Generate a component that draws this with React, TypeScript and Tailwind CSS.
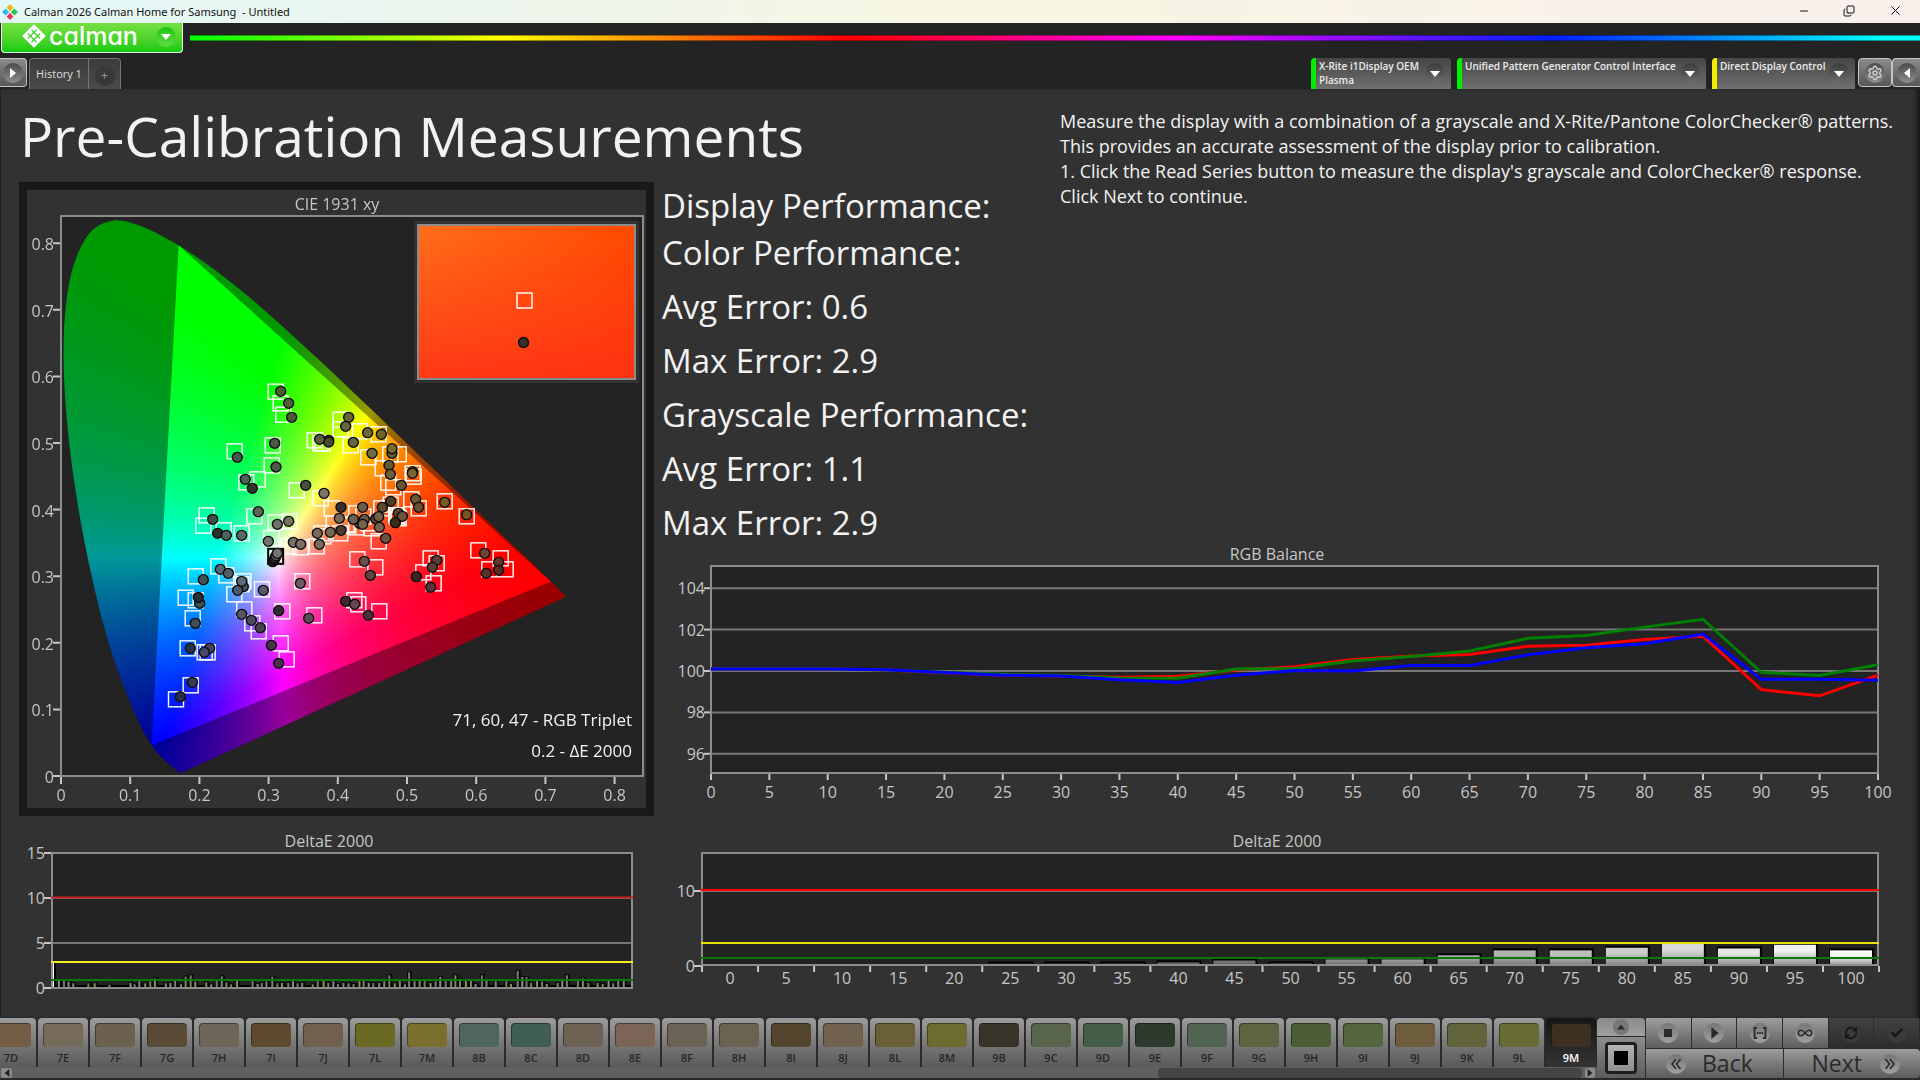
import { useLayoutEffect, useRef, type ReactNode } from "react";
import { Settings, Check, RefreshCw, X, Minus, Copy, Infinity as Loop } from "lucide-react";

type Pt = [number, number];
type Dot = [number, number, string];

const LABEL = "#c6c6c6";
const FRAME = "#8c8c8c";

/* ---------- CIE 1931 diagram ---------- */

const LOCUS: Pt[] = [
  [0.1741, 0.005], [0.1736, 0.0049], [0.1714, 0.0051], [0.1644, 0.0109], [0.1566, 0.0177],
  [0.144, 0.0297], [0.1355, 0.0399], [0.1241, 0.0578], [0.1096, 0.0868], [0.0913, 0.1327],
  [0.0687, 0.2007], [0.0454, 0.295], [0.0235, 0.4127], [0.0082, 0.5384], [0.0039, 0.6548],
  [0.0139, 0.7502], [0.0389, 0.812], [0.0743, 0.8338], [0.1142, 0.8262], [0.1547, 0.8059],
  [0.1929, 0.7816], [0.2296, 0.7543], [0.2658, 0.7243], [0.3016, 0.6923], [0.3373, 0.6589],
  [0.3731, 0.6245], [0.4087, 0.5896], [0.4441, 0.5547], [0.4788, 0.5202], [0.5125, 0.4866],
  [0.5448, 0.4544], [0.5752, 0.4242], [0.6029, 0.3965], [0.627, 0.3725], [0.6482, 0.3514],
  [0.6658, 0.334], [0.6915, 0.3083], [0.714, 0.2859], [0.7300, 0.2690],
];
const GAMUT: Pt[] = [[0.17, 0.797], [0.708, 0.292], [0.131, 0.046]];

const PANEL = { x: 27, y: 190, w: 619, h: 618 };
const cx = (x: number) => 61 + 692 * x;
const cy = (y: number) => 776 - 666 * y;

function smoothPath(ctx: CanvasRenderingContext2D, pts: Pt[]) {
  const p = pts.map(([x, y]): Pt => [cx(x) - PANEL.x, cy(y) - PANEL.y]);
  ctx.beginPath();
  ctx.moveTo(p[0][0], p[0][1]);
  for (let i = 0; i < p.length - 1; i++) {
    const a = p[Math.max(i - 1, 0)], b = p[i], c = p[i + 1], d = p[Math.min(i + 2, p.length - 1)];
    ctx.bezierCurveTo(
      b[0] + (c[0] - a[0]) / 6, b[1] + (c[1] - a[1]) / 6,
      c[0] - (d[0] - b[0]) / 6, c[1] - (d[1] - b[1]) / 6,
      c[0], c[1],
    );
  }
  ctx.closePath();
}

function colourField(gain: number) {
  const c = document.createElement("canvas");
  c.width = PANEL.w;
  c.height = PANEL.h;
  const ctx = c.getContext("2d")!;
  const img = ctx.createImageData(PANEL.w, PANEL.h);
  for (let j = 0; j < PANEL.h; j++) {
    for (let i = 0; i < PANEL.w; i++) {
      const x = (i + PANEL.x - 61) / 692;
      const y = Math.max((776 - j - PANEL.y) / 666, 0.002);
      const X = x / y, Z = (1 - x - y) / y;
      const rgb = [
        3.2406 * X - 1.5372 - 0.4986 * Z,
        -0.9689 * X + 1.8758 + 0.0415 * Z,
        0.0557 * X - 0.204 + 1.057 * Z,
      ].map((v) => Math.max(v, 0));
      const top = Math.max(...rgb, 0.0001);
      const o = (j * PANEL.w + i) * 4;
      for (let k = 0; k < 3; k++) img.data[o + k] = (rgb[k] / top) * 255 * gain;
      img.data[o + 3] = 255;
    }
  }
  ctx.putImageData(img, 0, 0);
  return c;
}

function Horseshoe() {
  const ref = useRef<HTMLCanvasElement>(null);
  useLayoutEffect(() => {
    const ctx = ref.current!.getContext("2d")!;
    ctx.clearRect(0, 0, PANEL.w, PANEL.h);
    ctx.save();
    smoothPath(ctx, LOCUS);
    ctx.clip();
    ctx.drawImage(colourField(0.6), 0, 0);
    ctx.beginPath();
    GAMUT.forEach(([x, y], i) => {
      if (i) ctx.lineTo(cx(x) - PANEL.x, cy(y) - PANEL.y);
      else ctx.moveTo(cx(x) - PANEL.x, cy(y) - PANEL.y);
    });
    ctx.closePath();
    ctx.clip();
    ctx.drawImage(colourField(1), 0, 0);
    ctx.restore();
  }, []);
  return <canvas ref={ref} width={PANEL.w} height={PANEL.h} className="absolute inset-0 h-full w-full" />;
}

/* Marker coordinates are in thirds of a unit, measured from (180, 370). */
const TARGETS: Pt[] = [
  [287, 65], [302, 100], [310, 134], [278, 226], [164, 244], [275, 286], [233, 328], [199, 337],
  [404, 211], [421, 220], [428, 220], [482, 149], [482, 178], [540, 184], [596, 193], [512, 226],
  [565, 262], [631, 253], [656, 253], [608, 295], [698, 310], [701, 320], [625, 338], [640, 352],
  [350, 361], [422, 385], [80, 436], [70, 467], [131, 481], [185, 490], [223, 439], [287, 457],
  [328, 454], [274, 505], [455, 415], [694, 388], [716, 415], [794, 394], [860, 439], [632, 404],
  [604, 415], [529, 430], [649, 436], [652, 440], [656, 445], [461, 460], [424, 490], [481, 490],
  [430, 499], [325, 529], [362, 532], [410, 529], [500, 463], [505, 466], [529, 472], [550, 440],
  [575, 475], [566, 460], [596, 514], [115, 589], [47, 619], [139, 616], [190, 634], [184, 643],
  [163, 673], [17, 683], [47, 691], [246, 658], [367, 634], [193, 718], [38, 745], [217, 760],
  [236, 784], [307, 724], [403, 736], [302, 820], [320, 868], [23, 835], [74, 847], [83, 847],
  [32, 946], [-12, 988], [532, 568], [586, 592], [523, 691], [535, 703], [598, 724], [752, 565],
  [770, 580], [730, 607], [761, 640], [895, 541], [962, 565], [928, 598], [977, 598],
];

const READINGS: Dot[] = [
  [302, 64, "#4c5c30"], [326, 100, "#4f5f38"], [335, 142, "#4b5b35"], [284, 220, "#4a5a45"],
  [172, 262, "#43564c"], [288, 291, "#4f5a45"], [196, 328, "#4a5f55"], [217, 355, "#2c352e"],
  [446, 211, "#3f4425"], [446, 216, "#484b28"], [419, 208, "#5a5f3a"], [506, 142, "#66652f"],
  [497, 169, "#65653a"], [563, 188, "#6b6a35"], [604, 193, "#6e6628"], [520, 217, "#66643a"],
  [576, 250, "#736c40"], [636, 250, "#6a5d2c"], [636, 236, "#786a2e"], [627, 286, "#67592f"],
  [631, 313, "#6f5f3c"], [698, 305, "#5c4520"], [697, 310, "#7c6430"], [664, 346, "#665532"],
  [377, 346, "#4a5040"], [432, 370, "#7a7563"], [483, 412, "#372f25"], [548, 412, "#6b5d48"],
  [607, 412, "#5c4a33"], [632, 394, "#4c3e2b"], [707, 388, "#6d5833"], [716, 412, "#6a5030"],
  [794, 397, "#7a5a26"], [860, 434, "#7a5520"], [655, 430, "#5c4530"], [667, 439, "#6b5540"],
  [646, 458, "#3c2a1d"], [235, 425, "#5a645c"], [98, 448, "#3a5048"], [113, 490, "#24322d"],
  [139, 496, "#4d615b"], [185, 496, "#596b65"], [292, 463, "#70736a"], [326, 454, "#74735f"],
  [265, 514, "#707570"], [478, 445, "#7a6a58"], [538, 460, "#6a5746"], [520, 448, "#6e5f4e"],
  [553, 448, "#6a5644"], [548, 463, "#75614f"], [587, 446, "#5c4735"], [596, 440, "#755f49"],
  [598, 472, "#76604e"], [617, 505, "#6e5343"], [412, 490, "#766a5c"], [451, 487, "#75685b"],
  [483, 481, "#4c3a30"], [340, 517, "#77716a"], [362, 523, "#7b7068"], [418, 523, "#7a6a60"],
  [121, 598, "#56666d"], [145, 610, "#505f66"], [70, 629, "#41545a"], [190, 650, "#4a5562"],
  [173, 661, "#50596a"], [185, 634, "#5d6b76"], [59, 700, "#415056"], [55, 682, "#233036"],
  [250, 661, "#59586a"], [361, 640, "#6e5a62"], [46, 760, "#414f5a"], [185, 733, "#565665"],
  [214, 751, "#4d4a5c"], [241, 773, "#463f50"], [296, 722, "#332a35"], [386, 745, "#604a58"],
  [274, 826, "#48334a"], [296, 880, "#4a2c4a"], [31, 835, "#273248"], [89, 835, "#434360"],
  [73, 847, "#484868"], [37, 937, "#383a58"], [1, 980, "#2c2c4c"], [553, 574, "#6a4f4b"],
  [571, 616, "#604448"], [497, 694, "#43272e"], [524, 703, "#664450"], [565, 736, "#4f2e3c"],
  [770, 571, "#5f3c35"], [757, 592, "#5c3a36"], [709, 620, "#3f2426"], [752, 652, "#5a333a"],
  [914, 550, "#6f4530"], [956, 577, "#6a3528"], [919, 610, "#5c2f2b"], [956, 601, "#5a2a25"],
];
const WHITE_CLUSTER: Dot[] = [
  [278, 575, "#1f1f1f"], [282, 570, "#2a2a2a"], [285, 564, "#444"], [288, 558, "#5a5a5a"], [292, 550, "#767676"],
];

const mx = (x: number) => 180 + x / 3;
const my = (y: number) => 370 + y / 3;

function Dots({ items }: { items: Dot[] }) {
  return (
    <>
      {items.map(([x, y, c], i) => (
        <circle key={i} cx={mx(x)} cy={my(y)} r="5" fill={c} stroke="#0c0c0c" strokeWidth="1.4" />
      ))}
    </>
  );
}

function CieChart() {
  const ticks = [0, 1, 2, 3, 4, 5, 6, 7, 8];
  return (
    <figure className="relative bg-[#323232]">
      <svg viewBox="27 190 619 618" className="block w-full">
        <rect x="61" y="216" width="582" height="560" fill="#232323" />
      </svg>
      <Horseshoe />
      <svg viewBox="27 190 619 618" className="absolute inset-0 h-full w-full" fontSize="16" fill={LABEL} role="img" aria-label="CIE 1931 xy chart">
        <text x="337" y="210" textAnchor="middle">CIE 1931 xy</text>
        <rect x="61" y="216" width="582" height="560" fill="none" stroke={FRAME} strokeWidth="2" />
        {ticks.map((t) => (
          <g key={t}>
            <path d={`M${cx(t / 10)} 777v7M60 ${cy(t / 10)}h-7`} stroke={LABEL} strokeWidth="2" />
            <text x={cx(t / 10)} y="801" textAnchor="middle">{t ? `0.${t}` : "0"}</text>
            <text x="54" y={cy(t / 10) + 7} textAnchor="end">{t ? `0.${t}` : "0"}</text>
          </g>
        ))}
        <g fill="none" stroke="#fff" strokeWidth="1.4">
          {TARGETS.map(([x, y], i) => (
            <rect key={i} x={mx(x) - 7.5} y={my(y) - 7.5} width="15" height="15" />
          ))}
        </g>
        <Dots items={READINGS} />
        <rect x={mx(287) - 7.5} y={my(559) - 7.5} width="15" height="15" fill="none" stroke="#000" strokeWidth="2" />
        <Dots items={WHITE_CLUSTER} />
        <defs>
          <linearGradient id="inset" x1="0" y1="0" x2="1" y2="0">
            <stop offset="0" stopColor="#ff6f1a" />
            <stop offset="1" stopColor="#ff4a00" />
          </linearGradient>
          <linearGradient id="insetFade" x1="0" y1="0" x2="0" y2="1">
            <stop offset="0" stopColor="#ff3018" stopOpacity="0" />
            <stop offset="1" stopColor="#ff2e14" stopOpacity="0.85" />
          </linearGradient>
        </defs>
        <rect x="414" y="221" width="225" height="162" fill="#323232" />
        <rect x="418" y="225" width="217" height="154" fill="url(#inset)" />
        <rect x="418" y="225" width="217" height="154" fill="url(#insetFade)" stroke={FRAME} strokeWidth="2" />
        <rect x="517" y="293" width="15" height="15" fill="none" stroke="#fff" strokeWidth="1.4" />
        <circle cx="523.5" cy="342.5" r="5" fill="#3b3024" stroke="#0c0c0c" strokeWidth="1.4" />
        <g fill="#f2f2f2" fontSize="17" textAnchor="end">
          <text x="632" y="726">71, 60, 47 - RGB Triplet</text>
          <text x="632" y="757">0.2 - ΔE 2000</text>
        </g>
      </svg>
    </figure>
  );
}

/* ---------- RGB balance ---------- */

const RED = [100.1, 100.1, 100.1, 100.05, 99.92, 99.8, 99.76, 99.7, 99.75, 100.05, 100.2, 100.55, 100.72, 100.8, 101.2, 101.25, 101.52, 101.68, 99.1, 98.8, 99.8];
const GREEN = [100.1, 100.1, 100.1, 100.05, 99.94, 99.84, 99.78, 99.66, 99.65, 100.1, 100.12, 100.48, 100.7, 100.97, 101.58, 101.72, 102.12, 102.5, 99.94, 99.78, 100.3];
const BLUE = [100.1, 100.1, 100.1, 100.06, 99.93, 99.8, 99.76, 99.58, 99.45, 99.8, 100.02, 100, 100.26, 100.26, 100.78, 101.12, 101.32, 101.78, 99.6, 99.6, 99.55];

function RgbBalance() {
  const x = (i: number) => 711 + i * 58.35;
  const y = (v: number) => 671 - (v - 100) * 20.7;
  const line = (s: number[]) => s.map((v, i) => `${x(i)},${y(v)}`).join(" ");
  return (
    <svg viewBox="654 541 1266 275" className="block w-full" fontSize="16" fill={LABEL} role="img" aria-label="RGB Balance chart">
      <text x="1277" y="560" textAnchor="middle">RGB Balance</text>
      <rect x="711" y="566" width="1167" height="207" fill="#232323" />
      {[104, 102, 100, 98, 96].map((v) => (
        <g key={v}>
          <path d={`M711 ${y(v)}H1878`} stroke="#777" strokeWidth="2" />
          <path d={`M704 ${y(v)}h7`} stroke={LABEL} strokeWidth="2" />
          <text x="705" y={y(v) + 6} textAnchor="end">{v}</text>
        </g>
      ))}
      <rect x="711" y="566" width="1167" height="207" fill="none" stroke={FRAME} strokeWidth="2" />
      {RED.map((_, i) => (
        <g key={i}>
          <path d={`M${x(i)} 774v6`} stroke={LABEL} strokeWidth="2" />
          <text x={x(i)} y="798" textAnchor="middle">{i * 5}</text>
        </g>
      ))}
      <g fill="none" strokeWidth="3">
        <polyline points={line(RED)} stroke="#f00" />
        <polyline points={line(GREEN)} stroke="#008000" />
        <polyline points={line(BLUE)} stroke="#00f" />
      </g>
    </svg>
  );
}

/* ---------- DeltaE charts ---------- */

/* Position and height of each patch bar, in chart thirds. */
const PATCH_BARS: Pt[] = [
  [140, 20], [152, 19], [163, 16], [174, 11], [210, 11], [225, 11], [260, 7], [310, 12], [320, 8],
  [331, 18], [345, 11], [357, 17], [368, 26], [394, 11], [405, 12], [416, 20], [430, 8], [441, 31],
  [453, 35], [464, 16], [490, 14], [502, 8], [515, 18], [527, 32], [538, 13], [549, 8], [563, 21],
  [600, 18], [612, 9], [622, 12], [633, 17], [647, 31], [659, 11], [670, 12], [685, 12], [696, 17],
  [707, 11], [718, 12], [743, 8], [755, 18], [769, 21], [780, 12], [792, 17], [803, 9], [816, 12],
  [828, 11], [840, 9], [854, 20], [864, 18], [876, 12], [887, 12], [901, 12], [913, 17], [925, 35],
  [938, 11], [950, 20], [962, 8], [972, 44], [985, 17], [997, 25], [1009, 18], [1023, 12], [1035, 17],
  [1046, 30], [1059, 18], [1072, 20], [1082, 35], [1093, 25], [1107, 18], [1119, 18], [1130, 9],
  [1145, 35], [1156, 18], [1178, 17], [1203, 18], [1214, 9], [1230, 48], [1241, 30], [1251, 30],
  [1262, 12], [1276, 20], [1288, 17], [1299, 9], [1325, 12], [1336, 20], [1347, 35], [1373, 18],
  [1385, 26], [1398, 12], [1420, 12], [1432, 9], [1446, 18], [1457, 11], [1469, 18], [1482, 26],
];
const BAR_TINTS = ["#8d8d8d", "#7e8a60", "#8a7a6a", "#6d8a88", "#9a8a55", "#86707c", "#708060"];

function PatchDelta() {
  return (
    <svg viewBox="0 828 654 172" className="block w-full" fontSize="16" fill={LABEL} role="img" aria-label="DeltaE 2000 per patch">
      <text x="329" y="847" textAnchor="middle">DeltaE 2000</text>
      <rect x="52" y="853" width="580" height="135" fill="#232323" />
      {[15, 10, 5, 0].map((v) => (
        <g key={v}>
          <path d={`M52 ${988 - v * 9}H632`} stroke="#777" strokeWidth="2" />
          <path d={`M44 ${988 - v * 9}h7`} stroke={LABEL} strokeWidth="2" />
          <text x="45" y={994 - v * 9} textAnchor="end">{v}</text>
        </g>
      ))}
      <path d="M56 986H632" stroke="#000" strokeWidth="2" />
      {PATCH_BARS.map(([x, h], i) => (
        <g key={x}>
          <rect x={x / 2.376 - 2} y={987 - h / 3 - 1} width="5" height={h / 3 + 1} fill="#080808" />
          <rect x={x / 2.376 - 1} y={987 - h / 3} width="2" height={h / 3} fill={BAR_TINTS[(i * 5) % 7]} />
        </g>
      ))}
      <rect x="54" y="962" width="2" height="26" fill="#000" />
      <rect x="52" y="962" width="2" height="26" fill="#fff" />
      <rect x="52" y="853" width="580" height="135" fill="none" stroke={FRAME} strokeWidth="2" />
      <path d="M51 897.500H633" stroke="#c82020" strokeWidth="2" />
      <path d="M51 962H633" stroke="#f2ee20" strokeWidth="2" />
      <path d="M51 980H633" stroke="#087808" strokeWidth="2" />
    </svg>
  );
}

const GRAY_BARS: number[] = [0, 0, 0, 0, 0, 0.2, 0.2, 0.2, 0.35, 0.6, 0.2, 0.75, 0.75, 1.3, 1.95, 1.95, 2.3, 2.8, 2.2, 2.7, 1.95];

function GrayDelta() {
  const step = 56.05;
  return (
    <svg viewBox="654 828 1266 172" className="block w-full" fontSize="16" fill={LABEL} role="img" aria-label="DeltaE 2000 per gray level">
      <defs>
        <linearGradient id="shade" x1="0" y1="0" x2="0" y2="1">
          <stop offset="0.3" stopColor="#555" stopOpacity="0" />
          <stop offset="1" stopColor="#555" stopOpacity="0.6" />
        </linearGradient>
      </defs>
      <text x="1277" y="847" textAnchor="middle">DeltaE 2000</text>
      <rect x="702" y="853" width="1176" height="112" fill="#232323" />
      <path d="M702 891H1878" stroke="#777" strokeWidth="2" />
      {[10, 0].map((v) => (
        <g key={v}>
          <path d={`M694 ${966 - v * 7.5}h7`} stroke={LABEL} strokeWidth="2" />
          <text x="695" y={972 - v * 7.5} textAnchor="end">{v}</text>
        </g>
      ))}
      {GRAY_BARS.map((v, i) => {
        const x = 702 + i * step;
        const g = Math.round(i * 12.75);
        return (
          <g key={i}>
            {v > 0 && (
              <>
                <rect x={x + 6} y={964 - v * 7.5 - 1} width="45" height={v * 7.5 + 2} fill="#000" />
                <rect x={x + 7} y={965 - v * 7.5} width="42" height={v * 7.5} fill={`rgb(${g},${g},${g})`} />
                <rect x={x + 7} y={965 - v * 7.5} width="42" height={v * 7.5} fill="url(#shade)" />
              </>
            )}
            <path d={`M${x} 966v6`} stroke={LABEL} strokeWidth="2" />
            <text x={x + step / 2} y="984" textAnchor="middle">{i * 5}</text>
          </g>
        );
      })}
      <path d={`M${702 + 21 * step} 966v6`} stroke={LABEL} strokeWidth="2" />
      <rect x="702" y="853" width="1176" height="112" fill="none" stroke={FRAME} strokeWidth="2" />
      <path d="M701 890H1879" stroke="#f00" strokeWidth="2" />
      <path d="M701 943H1879" stroke="#e8e000" strokeWidth="2" />
      <path d="M701 958H1879" stroke="#087808" strokeWidth="2" />
    </svg>
  );
}

/* ---------- Chrome ---------- */

function Triangle({ dir, className }: { dir: "down" | "left" | "right" | "up"; className?: string }) {
  const d = { down: "M0 2h10L5 8z", up: "M0 8h10L5 2z", left: "M8 0v10L2 5z", right: "M2 0v10l6-5z" }[dir];
  return (
    <svg viewBox="0 0 10 10" className={className ?? "size-2.5"} fill="currentColor" aria-hidden="true">
      <path d={d} />
    </svg>
  );
}

function TitleBar() {
  return (
    <div className="flex h-[23px] items-center bg-linear-to-r from-[#e2f7f8] via-[#f7f5e2] to-[#f9f0ec] pl-[2px] text-[11px] text-[#111]">
      <svg viewBox="0 0 16 16" className="size-4" aria-hidden="true">
        <path d="M8 0l3.400 3.600L8 7.200 4.600 3.600z" fill="#f5b81c" />
        <path d="M12.400 4.400L16 8l-3.600 3.600L8.900 8z" fill="#2fc24a" />
        <path d="M8 8.800l3.400 3.600L8 16l-3.400-3.600z" fill="#ee2f5e" />
        <path d="M3.600 4.400L7.100 8l-3.500 3.600L0 8z" fill="#35b5e8" />
      </svg>
      <span className="ml-[6px] flex-1 pt-px font-['Noto_Sans',sans-serif] whitespace-pre">Calman 2026 Calman Home for Samsung  - Untitled</span>
      <button aria-label="Minimize" className="flex w-[45px] justify-center pb-[2px]"><Minus className="size-3" strokeWidth={2} /></button>
      <button aria-label="Restore" className="flex w-[45px] justify-center pb-[2px]"><Copy className="size-3 -scale-x-100 rotate-180" strokeWidth={2} /></button>
      <button aria-label="Close" className="flex w-[49px] justify-center pb-[2px]"><X className="size-[15px]" strokeWidth={1.6} /></button>
    </div>
  );
}

function LogoMark() {
  return (
    <svg viewBox="0 0 24 24" className="size-6" aria-hidden="true">
      <path d="M12 1.200L22.800 12 12 22.800 1.200 12z" fill="#fff" stroke="#fff" strokeWidth="1.600" strokeLinejoin="round" />
      <g transform="rotate(45 12 12)" fill="none" stroke="#3ed32a" strokeWidth="1.200">
        <path d="M9.500 6v12M14.500 6v12M6 9.500h12M6 14.500h12" />
      </g>
    </svg>
  );
}

function Header() {
  return (
    <header className="flex h-[30px] items-center bg-[#232323]">
      <button aria-label="calman menu" className="ml-px flex h-[30px] w-[182px] items-center self-start rounded-b-[4px] border-x border-b border-[#e8ffe8] bg-linear-to-b from-[#74e042] to-[#06cb10] pb-[3px] pl-5 text-white">
        <LogoMark />
        <span className="ml-[3px] font-['Inter'] text-[25px] leading-6 font-medium [font-feature-settings:'cv11']">calman</span>
        <span className="mt-[2px] mr-[6px] ml-auto flex size-5 items-center justify-center rounded-full bg-linear-to-b from-[#0cc414] to-[#60dc40]">
          <Triangle dir="down" />
        </span>
      </button>
      <div className="ml-[7px] h-[6px] flex-1 border-y border-black/40 bg-[linear-gradient(to_right,#00ff00,#ffff00_18%,#ff0000_38%,#ff00ff_57%,#0020ff_79%,#00ffff_98%)]" />
    </header>
  );
}

function DeviceTab({ stripe, width, lines }: { stripe: string; width: string; lines: string[] }) {
  return (
    <button className={`flex h-[31px] items-start overflow-hidden rounded-t-[4px] bg-linear-to-b from-[#464646] to-[#707070] text-left ${width}`}>
      <span className={`h-full w-[5px] shrink-0 ${stripe}`} />
      <span className="ml-[3px] flex-1 pt-px text-[10px] leading-[14px] font-semibold whitespace-nowrap text-[#ececec]">
        {lines.map((l) => (
          <span key={l} className="block">{l}</span>
        ))}
      </span>
      <span className="mt-[5px] mr-[6px] flex size-5 shrink-0 items-center justify-center rounded-full bg-linear-to-b from-[#3c3c3c] to-[#6c6c6c] pt-[2px] text-white">
        <Triangle dir="down" />
      </span>
    </button>
  );
}

const chromeButton = "flex h-[29px] items-center justify-center border border-[#c4c4c4] bg-linear-to-b from-[#8c8c8c] to-[#565656]";
const chromeDisc = "flex size-5 items-center justify-center rounded-full bg-linear-to-b from-[#4c4c4c] to-[#8e8e8e] text-white";

function TabRow() {
  return (
    <nav className="flex h-[36px] items-start bg-[#232323] pt-[5px]">
      <button aria-label="Expand panel" className={`w-[27px] rounded-r-[4px] border-l-0 ${chromeButton}`}>
        <span className={chromeDisc}><Triangle dir="right" className="size-2.5" /></span>
      </button>
      <div className="ml-[2px] flex h-[31px] rounded-t-[4px] border border-b-0 border-[#747474] bg-linear-to-b from-[#3c3c3c] to-[#4a4a4a]">
        <button className="w-[58px] text-[11px] text-[#dedede]">History 1</button>
        <button aria-label="Add history" className="flex w-[32px] items-center justify-center border-l border-[#747474] pt-1">
          <span className="flex size-5 items-center justify-center rounded-full bg-[#383838] text-[12px] leading-none text-[#9a9a9a]">+</span>
        </button>
      </div>
      <div className="ml-auto flex items-start gap-[6px]">
        <DeviceTab stripe="bg-[#00ee00]" width="w-[140px]" lines={["X-Rite i1Display OEM", "Plasma"]} />
        <DeviceTab stripe="bg-[#00ee00]" width="w-[249px]" lines={["Unified Pattern Generator Control Interface"]} />
        <DeviceTab stripe="bg-[#f0ee00]" width="w-[143px]" lines={["Direct Display Control"]} />
      </div>
      <button aria-label="Settings" className={`ml-[3px] w-[34px] rounded-[4px] ${chromeButton}`}>
        <span className={chromeDisc}><Settings className="size-4 text-[#cfcfcf]" strokeWidth={2.2} /></span>
      </button>
      <button aria-label="Collapse panel" className={`w-[28px] rounded-l-[4px] border-r-0 ${chromeButton}`}>
        <span className={chromeDisc}><Triangle dir="left" className="size-2.5" /></span>
      </button>
    </nav>
  );
}

/* ---------- Bottom bar ---------- */

const PATCHES: [string, string][] = [
  ["7D", "#735d45"], ["7E", "#776b5b"], ["7F", "#6c614f"], ["7G", "#5a4b37"], ["7H", "#6f6558"],
  ["7I", "#5e4b2d"], ["7J", "#72604f"], ["7L", "#6b6a24"], ["7M", "#7a6f2e"], ["8B", "#4f665d"],
  ["8C", "#405e55"], ["8D", "#6d6153"], ["8E", "#7a6556"], ["8F", "#6b6154"], ["8H", "#6b6252"],
  ["8I", "#52442d"], ["8J", "#716250"], ["8L", "#696037"], ["8M", "#6c6c31"], ["9B", "#38342a"],
  ["9C", "#58654c"], ["9D", "#445d47"], ["9E", "#2e3a2d"], ["9F", "#526554"], ["9G", "#5c6440"],
  ["9H", "#4a5d33"], ["9I", "#54663d"], ["9J", "#6d5d3c"], ["9K", "#61633a"], ["9L", "#686c34"],
  ["9M", "#3d2f21"],
];

function PatchStrip() {
  return (
    <div className="min-w-0 flex-1">
      <div className="flex h-[49px] justify-end gap-[2px] overflow-hidden bg-[#2b2b2b] pr-px">
        {PATCHES.map(([name, colour]) => {
          const on = name === "9M";
          return (
            <button
              key={name}
              className={`flex w-[50px] shrink-0 flex-col items-center rounded-t-[4px] pt-[5px] bg-linear-to-b ${on ? "from-[#161616] to-[#343434] text-white" : "from-[#9c9c9c] to-[#5a5a5a] text-[#262626]"}`}
            >
              <span className="h-6 w-10 rounded-[4px] border-t border-l border-black/40" style={{ backgroundColor: colour }} />
              <span className="mt-[3px] text-[11px] leading-4 font-semibold">{name}</span>
            </button>
          );
        })}
      </div>
      <div className="flex h-[13px] items-center border-b-2 border-[#2a2a2a] bg-[#5f5f5f]">
        <button aria-label="Scroll left" className="ml-px flex h-[10px] w-[11px] items-center justify-center rounded-[2px] bg-[#8a8a8a] text-[#222]">
          <Triangle dir="left" className="size-2" />
        </button>
        <div className="flex flex-1 justify-end">
          <div className="h-[10px] w-[27%] rounded-[4px] bg-[#444]" />
        </div>
        <button aria-label="Scroll right" className="mr-[2px] ml-[3px] flex h-[10px] w-[10px] items-center justify-center rounded-[2px] bg-[#8a8a8a] text-[#222]">
          <Triangle dir="right" className="size-2" />
        </button>
      </div>
    </div>
  );
}

const disc = "flex size-5 items-center justify-center rounded-full";
const lightDisc = "bg-linear-to-b from-[#767676] to-[#a0a0a0]";

function ToolButton({ label, off, children }: { label: string; off?: boolean; children: ReactNode }) {
  return (
    <button
      aria-label={label}
      className={`flex flex-1 items-center justify-center border-r border-[#2c2c2c] bg-linear-to-b ${off ? "from-[#424242] to-[#2c2c2c] text-[#161616]" : "from-[#9e9e9e] to-[#5e5e5e] text-[#2a2a2a]"}`}
    >
      <span className={`${disc} ${off ? "bg-[#3a3a3a]" : lightDisc}`}>{children}</span>
    </button>
  );
}

function Chevrons({ flip }: { flip?: boolean }) {
  return (
    <svg viewBox="0 0 12 12" className={`size-3 ${flip ? "-scale-x-100" : ""}`} fill="none" stroke="currentColor" strokeWidth="1.600" aria-hidden="true">
      <path d="M6 1L2 6l4 5M10.500 1l-4 5 4 5" />
    </svg>
  );
}

function Controls() {
  return (
    <div className="flex h-[62px] w-[323px] shrink-0 gap-px border-b-2 border-[#2a2a2a] bg-[#2c2c2c]">
      <div className="flex w-[48px] flex-col gap-px">
        <button aria-label="Expand controls" className="flex h-[18px] items-center justify-center rounded-t-[4px] bg-linear-to-b from-[#8a8a8a] to-[#a0a0a0] text-[#2a2a2a]">
          <span className="flex size-4 items-center justify-center rounded-full bg-[#787878]"><Triangle dir="up" className="size-2" /></span>
        </button>
        <button aria-label="Pattern window" className="flex flex-1 items-center justify-center bg-linear-to-b from-[#8c8c8c] to-[#5c5c5c]">
          <span className="flex size-8 items-center justify-center rounded-[4px] border-[3px] border-[#1e1e1e] bg-linear-to-b from-[#b4b4b4] to-[#8e8e8e]">
            <span className="size-[14px] bg-black" />
          </span>
        </button>
      </div>
      <div className="flex flex-1 flex-col gap-px">
        <div className="flex h-[30px]">
          <ToolButton label="Stop"><span className="size-2 bg-current" /></ToolButton>
          <ToolButton label="Read"><Triangle dir="right" className="ml-[2px] size-3" /></ToolButton>
          <ToolButton label="Read series">
            <svg viewBox="0 0 14 12" className="h-3 w-3.5" fill="none" stroke="currentColor" strokeWidth="1.800" aria-hidden="true">
              <path d="M4 1H1.500v10H4M10 1h2.500v10H10" />
              <path d="M3.800 6h6.400" strokeDasharray="1.600 .8" />
            </svg>
          </ToolButton>
          <ToolButton label="Read continuous"><Loop className="size-4" strokeWidth={2.2} /></ToolButton>
          <ToolButton label="Refresh" off><RefreshCw className="size-3.5" strokeWidth={3} /></ToolButton>
          <ToolButton label="Accept" off><Check className="size-3.5" strokeWidth={4} /></ToolButton>
        </div>
        <div className="flex flex-1 text-[23px] leading-none font-medium text-[#2a2a2a]">
          <button className="flex flex-1 items-center border-r border-[#2c2c2c] bg-linear-to-b from-[#9c9c9c] to-[#5c5c5c] pl-5">
            <span className={`${disc} ${lightDisc}`}><Chevrons /></span>
            <span className="ml-4">Back</span>
          </button>
          <button className="flex flex-1 items-center justify-end rounded-r-[4px] bg-linear-to-b from-[#9c9c9c] to-[#5c5c5c] pr-5">
            <span className="mr-[18px]">Next</span>
            <span className={`${disc} ${lightDisc}`}><Chevrons flip /></span>
          </button>
        </div>
      </div>
    </div>
  );
}

export default function App() {
  return (
    <div className="flex min-h-screen flex-col bg-[#323232] font-['Open_Sans',sans-serif] text-[#f2f2f2]">
      <TitleBar />
      <Header />
      <TabRow />
      <main className="grid flex-1 grid-cols-[654fr_406fr_860fr] content-start shadow-[inset_1px_0_#232323,inset_-5px_0_5px_-2px_#161616]">
        <h1 className="col-span-2 row-start-1 h-[93px] pt-[9px] pl-[20px] text-[55px] leading-[75px] whitespace-nowrap">
          Pre-Calibration Measurements
        </h1>
        <div className="col-start-3 row-span-2 row-start-1 pt-5 text-[18px] leading-[25px]">
          <p>Measure the display with a combination of a grayscale and X-Rite/Pantone ColorChecker® patterns.</p>
          <p>This provides an accurate assessment of the display prior to calibration.</p>
          <p>1. Click the Read Series button to measure the display's grayscale and ColorChecker® response.</p>
          <p>Click Next to continue.</p>
        </div>
        <section className="col-start-1 row-span-2 row-start-2 ml-[19px] border-8 border-[#191919]">
          <CieChart />
        </section>
        <section className="col-start-2 row-start-2 flex flex-col gap-[10px] pt-[2px] pl-2 text-[33px] leading-[44px] whitespace-nowrap">
          <h2 className="-mb-[7px]">Display Performance:</h2>
          <h3>Color Performance:</h3>
          <p>Avg Error: 0.6</p>
          <p>Max Error: 2.9</p>
          <h3>Grayscale Performance:</h3>
          <p>Avg Error: 1.1</p>
          <p className="-mb-1">Max Error: 2.9</p>
        </section>
        <section className="col-span-2 col-start-2 row-start-3">
          <RgbBalance />
        </section>
        <section className="col-start-1 row-start-4 pt-3">
          <PatchDelta />
        </section>
        <section className="col-span-2 col-start-2 row-start-4 pt-3">
          <GrayDelta />
        </section>
      </main>
      <footer className="flex">
        <PatchStrip />
        <Controls />
      </footer>
    </div>
  );
}
